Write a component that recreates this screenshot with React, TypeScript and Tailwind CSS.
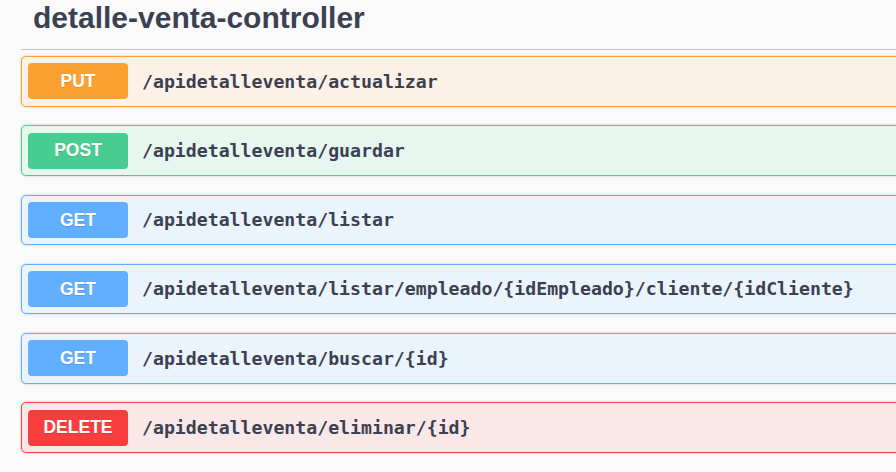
const ops = [
  {
    method: 'PUT',
    path: '/apidetalleventa/actualizar',
    box: 'border-[#fca130] bg-[#fbf1e6]',
    badge: 'bg-[#fca130]',
  },
  {
    method: 'POST',
    path: '/apidetalleventa/guardar',
    box: 'border-[#49cc90] bg-[#e8f6f0]',
    badge: 'bg-[#49cc90]',
  },
  {
    method: 'GET',
    path: '/apidetalleventa/listar',
    box: 'border-[#61affe] bg-[#ebf3fb]',
    badge: 'bg-[#61affe]',
  },
  {
    method: 'GET',
    path: '/apidetalleventa/listar/empleado/{idEmpleado}/cliente/{idCliente}',
    box: 'border-[#61affe] bg-[#ebf3fb]',
    badge: 'bg-[#61affe]',
  },
  {
    method: 'GET',
    path: '/apidetalleventa/buscar/{id}',
    box: 'border-[#61affe] bg-[#ebf3fb]',
    badge: 'bg-[#61affe]',
  },
  {
    method: 'DELETE',
    path: '/apidetalleventa/eliminar/{id}',
    box: 'border-[#f93e3e] bg-[#fae7e7]',
    badge: 'bg-[#f93e3e]',
  },
];

function OpBlock({ method, path, box, badge }: (typeof ops)[number]) {
  return (
    <div
      className={`mb-[18.75px] flex items-center rounded-[5px] border px-[6px] py-[6.25px] shadow-[0_0_3px_rgba(0,0,0,0.19)] ${box}`}
    >
      <span
        className={`flex h-[36px] w-[100px] shrink-0 items-center justify-center rounded-[4px] text-[17.5px] font-bold text-white [text-shadow:0_1px_0_rgba(0,0,0,0.1)] ${badge}`}
        style={{ fontFamily: '"Liberation Sans", Arial, sans-serif' }}
      >
        {method}
      </span>
      <span
        className="pl-[14px] text-[18.2px] font-bold whitespace-nowrap text-[#3b4151]"
        style={{ fontFamily: '"DejaVu Sans Mono", monospace' }}
      >
        {path}
      </span>
    </div>
  );
}

export default function App() {
  return (
    <div className="h-[472px] w-[896px] overflow-hidden bg-[#fafafa]">
      <div className="w-[1000px] pl-[21px]">
        <h3
          className="border-b border-[#c4c6cb] pt-[3px] pb-[16px] pl-[12px] text-[30px] leading-[30px] font-bold text-[#3b4151]"
          style={{ fontFamily: '"Liberation Sans", Arial, sans-serif' }}
        >
          detalle-venta-controller
        </h3>
        <div className="pt-[6px]">
          {ops.map((op) => (
            <OpBlock key={op.path} {...op} />
          ))}
        </div>
      </div>
    </div>
  );
}
